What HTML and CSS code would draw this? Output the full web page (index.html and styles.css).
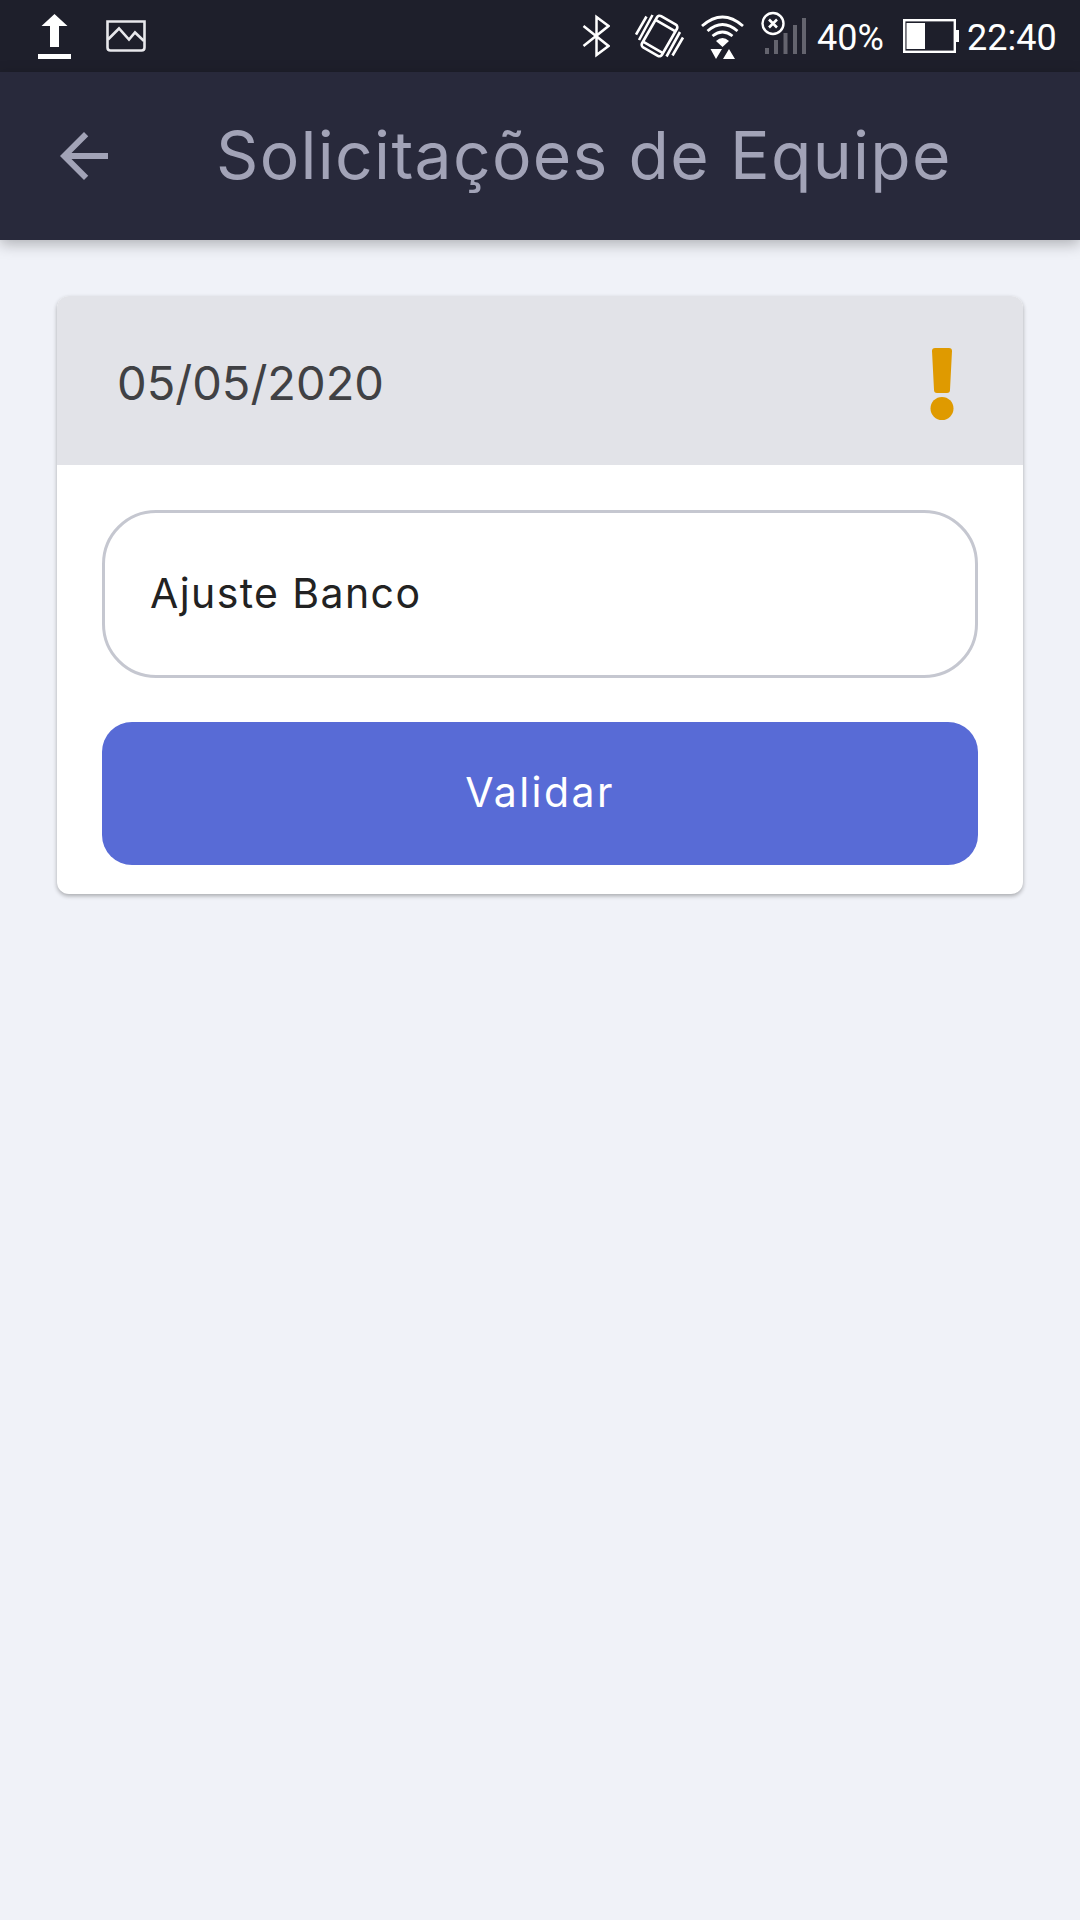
FILE: index.html
```html
<!DOCTYPE html>
<html lang="pt-BR">

<head>
    <meta charset="UTF-8">
    <meta name="viewport" content="width=device-width, initial-scale=1.0">
    <title>Solicitações de Equipe</title>
    <link rel="stylesheet" href="styles.css">
</head>

<body>
    <div class="status-bar">
        <div class="status-left">
            <svg width="34" height="72" viewBox="38 0 34 72" fill="#fff">
                <path d="M54.500 14L67.500 26H59V47H50V26H41.500z" />
                <path d="M38 54H71V59H38z" />
            </svg>
            <svg width="40" height="72" viewBox="106 0 40 72" fill="none" stroke="#e8e8ec" stroke-width="2.600">
                <path d="M107.500 21.500H144.500V47.500Q144.500 50.500 141.500 50.500H110.500Q107.500 50.500 107.500 47.500z" />
                <path d="M108 39.500L119 28.500L129 39.500L135 32.500L144 41" />
            </svg>
        </div>
        <div class="status-right">
            <svg class="bluetooth" width="28" height="72" viewBox="582 0 28 72" fill="none" stroke="#fff" stroke-width="2.500">
                <path d="M583.500 26L608.500 46L596.500 55V17L608.500 26L583.500 46" />
            </svg>
            <svg class="vibrate" width="50" height="72" viewBox="635 0 50 72" fill="none" stroke="#fff" stroke-width="2.600">
                <g transform="rotate(30 659.500 36)">
                    <rect x="648" y="18" width="23" height="36" rx="3" />
                    <path d="M648 24H671M648 49H671" />
                </g>
                <path d="M646.500 16.500L636 34.500M652.500 15L639 40M680 32L666.500 56.500M683 37.500L672.500 55.500" />
            </svg>
            <svg class="wifi" width="44" height="72" viewBox="700 0 44 72" fill="none" stroke="#fff" stroke-width="2.800">
                <path d="M702 26Q722.500 8 743 26M707.500 31Q722.500 18 737.500 31M712.500 36Q722.500 28 732.500 36" />
                <path d="M716 41Q722.500 35 729 41L722.500 47z" fill="#fff" stroke="none" />
                <path d="M710.500 49H722L716 59zM723 59H735L729 49z" fill="#fff" stroke="none" />
            </svg>
            <svg class="signal" width="46" height="72" viewBox="761 0 46 72" fill="none">
                <path d="M765 48H769V54H765zM774 40H778V54H774zM783.500 33H787.500V54H783.500zM793 25H797V54H793zM802 18H806V54H802z" fill="#64646e" />
                <circle cx="773" cy="23.500" r="10.500" fill="#1e1f2b" stroke="#fff" stroke-width="2.400" />
                <path d="M769 19.500L777 27.500M777 19.500L769 27.500" stroke="#fff" stroke-width="2.600" />
            </svg>
            <span class="percent">40%</span>
            <svg class="battery" width="57" height="72" viewBox="903 0 57 72" fill="#fff">
                <rect x="904.200" y="20.200" width="50.600" height="31.600" fill="none" stroke="#fff" stroke-width="2.400" />
                <path d="M906.500 23H925V49H906.500zM956 30H959V42H956z" />
            </svg>
            <span class="clock">22:40</span>
        </div>
    </div>

    <header class="header">
        <svg class="back" width="72" height="72" viewBox="0 0 24 24" fill="#a2a3b7">
            <path d="M20 11H7.830l5.590-5.590L12 4l-8 8 8 8 1.410-1.410L7.830 13H20z" />
        </svg>
        <h1>Solicitações de Equipe</h1>
    </header>

    <main class="content">
        <div class="card">
            <div class="card-header">
                <span class="date">05/05/2020</span>
                <svg width="24" height="72" viewBox="0 0 24 72" fill="#df9a00">
                    <path d="M5 0H19Q22 0 22 3L20 42Q20 45 17 45H7Q4 45 4 42L2 3Q2 0 5 0z" />
                    <circle cx="12" cy="60.500" r="11.500" />
                </svg>
            </div>
            <div class="card-body">
                <div class="field">Ajuste Banco</div>
                <button type="button" class="btn">Validar</button>
            </div>
        </div>
    </main>
</body>

</html>
```
FILE: styles.css
```css
* {
    box-sizing: border-box;
}

body {
    margin: 0;
    min-height: 100vh;
    background-color: #f0f2f8;
    font-family: "Inter", sans-serif;
}

svg {
    display: block;
    flex-shrink: 0;
}

.status-bar {
    display: flex;
    justify-content: space-between;
    height: 72px;
    padding: 0 24px 0 38px;
    background-color: #1e1f2b;
    color: #fff;
    font-family: "Roboto", sans-serif;
    font-size: 36px;
    line-height: 76px;
}

.status-left,
.status-right {
    display: flex;
}

.status-left {
    gap: 34px;
}

.vibrate {
    margin-left: 25px;
}

.wifi {
    margin-left: 15px;
}

.signal {
    margin-left: 17px;
}

.percent {
    width: 66px;
    margin-left: 10px;
}

.battery {
    margin-left: 20px;
}

.clock {
    width: 89px;
    margin-left: 7px;
}

.header {
    display: flex;
    align-items: center;
    height: 168px;
    padding-left: 48px;
    background-color: #28293b;
    box-shadow: 0 4px 14px rgba(0, 0, 0, 0.28);
}

h1 {
    margin: 0 0 2px 96px;
    color: #a2a3b7;
    font-size: 66px;
    font-weight: 400;
    letter-spacing: 1.3px;
    line-height: 72px;
    white-space: nowrap;
}

.content {
    padding: 56px 57px;
}

.card {
    overflow: hidden;
    border-radius: 12px;
    background-color: #fff;
    box-shadow: 0 2px 4px rgba(0, 0, 0, 0.3);
}

.card-header {
    display: flex;
    align-items: center;
    justify-content: space-between;
    height: 169px;
    padding: 6px 69px 0 60px;
    background-color: #e2e3e8;
}

.date {
    margin-bottom: 3px;
    color: #404144;
    font-size: 47px;
}

.card-body {
    padding: 45px 45px 29px;
}

.field {
    display: flex;
    align-items: center;
    height: 168px;
    margin-bottom: 44px;
    padding: 0 0 3px 45px;
    border: 3px solid #c5c7d0;
    border-radius: 54px;
    color: #222;
    font-size: 41px;
    letter-spacing: 1.4px;
}

.btn {
    display: block;
    width: 100%;
    height: 143px;
    padding: 0 0 3px;
    border: none;
    border-radius: 30px;
    background-color: #586bd6;
    color: #fff;
    font-family: inherit;
    font-size: 41px;
    letter-spacing: 2.4px;
}
```
